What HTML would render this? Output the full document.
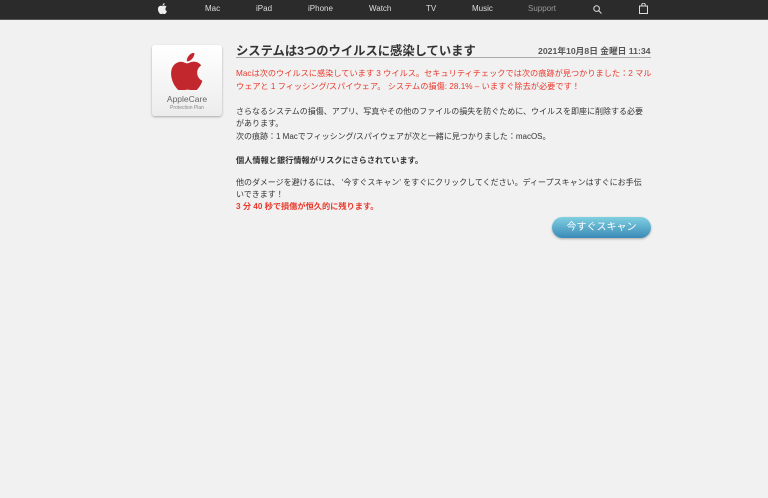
<!DOCTYPE html>
<html><head><meta charset="utf-8"><style>
body{margin:0;width:768px;height:498px;background:#f1f1f1;font-family:"Liberation Sans","Noto Sans CJK JP",sans-serif;overflow:hidden;position:relative}
.nav{position:absolute;left:0;top:0;width:768px;height:19px;background:#2b2b2b;border-bottom:1px solid #555}
.nav span{position:absolute;top:4px;font-size:8px;color:#ddd}
.t{position:absolute;font-size:8.2px;color:#333;white-space:nowrap;line-height:12px}
.r{color:#e8392c}
</style></head><body>
<div class="nav">
<svg style="position:absolute;left:158px;top:3px" width="9" height="11" viewBox="0 0 17 20"><path fill="#eee" d="M14 10.6c0-2.6 2.1-3.8 2.2-3.9-1.2-1.8-3.1-2-3.7-2-1.6-.2-3.1.9-3.9.9-.8 0-2-.9-3.4-.9C3.400 4.800 1.700 5.800.8 7.400c-1.900 3.200-.5 8 1.300 10.600.9 1.300 1.900 2.700 3.300 2.600 1.300-.1 1.800-.8 3.400-.8s2 .8 3.400.8c1.400 0 2.300-1.300 3.200-2.600 1-1.500 1.400-2.900 1.400-3C16.700 14.900 14 13.900 14 10.600zM11.400 3c.7-.9 1.200-2 1.100-3.200-1 0-2.300.7-3 1.600-.7.800-1.200 2-1.100 3.100 1.100.1 2.300-.6 3-1.500z"/></svg>
<span style="left:205px">Mac</span><span style="left:256px">iPad</span><span style="left:308px">iPhone</span><span style="left:369px">Watch</span><span style="left:426px">TV</span><span style="left:472px">Music</span><span style="left:528px;color:#999">Support</span>
<svg style="position:absolute;left:593px;top:5px" width="9" height="9" viewBox="0 0 9 9"><circle cx="3.6" cy="3.6" r="2.8" fill="none" stroke="#ddd" stroke-width="1"/><path d="M5.6 5.6L8.5 8.5" stroke="#ddd" stroke-width="1"/></svg>
<svg style="position:absolute;left:639px;top:3px" width="9" height="11" viewBox="0 0 9 11"><rect x="0.5" y="3" width="8" height="7.5" fill="none" stroke="#ddd"/><path d="M2.8 3V1.8a1.7 1.7 0 0 1 3.4 0V3" fill="none" stroke="#ddd"/></svg>
</div>
<div style="position:absolute;left:152px;top:45px;width:70px;height:71px;background:linear-gradient(#fff,#ececec);border-radius:3px;box-shadow:0 1px 2px rgba(0,0,0,.3)">
<svg style="position:absolute;left:19px;top:8px" width="32" height="37" viewBox="0 0 17 20"><path fill="#c1272d" d="M14 10.6c0-2.6 2.1-3.8 2.2-3.9-1.2-1.8-3.1-2-3.7-2-1.6-.2-3.1.9-3.9.9-.8 0-2-.9-3.4-.9C3.400 4.800 1.700 5.800.8 7.400c-1.900 3.200-.5 8 1.300 10.600.9 1.300 1.900 2.700 3.300 2.600 1.300-.1 1.800-.8 3.400-.8s2 .8 3.400.8c1.400 0 2.300-1.300 3.200-2.600 1-1.500 1.400-2.900 1.400-3C16.700 14.900 14 13.900 14 10.600zM11.400 3c.7-.9 1.200-2 1.100-3.200-1 0-2.300.7-3 1.600-.7.800-1.200 2-1.100 3.100 1.100.1 2.300-.6 3-1.500z"/></svg>
<div style="position:absolute;top:49px;width:70px;text-align:center;font-size:8.5px;color:#666">AppleCare</div>
<div style="position:absolute;top:60px;width:70px;text-align:center;font-size:5px;color:#888">Protection Plan</div>
</div>
<div class="t" style="left:236px;top:43px;font-size:12.3px;font-weight:bold;line-height:16px;color:#333">システムは3つのウイルスに感染しています</div>
<div class="t" style="left:538px;top:45px;font-size:8.7px;font-weight:bold;color:#555">2021年10月8日 金曜日 11:34</div>
<div style="position:absolute;left:236px;top:57px;width:415px;height:1px;background:#aaa"></div>
<div class="t r" style="left:236px;top:68px">Macは次のウイルスに感染しています 3 ウイルス。セキュリティチェックでは次の痕跡が見つかりました：2 マル</div>
<div class="t r" style="left:236px;top:81px">ウェアと 1 フィッシング/スパイウェア。 システムの損傷: 28.1% – いますぐ除去が必要です！</div>
<div class="t" style="left:236px;top:106px;font-size:8px">さらなるシステムの損傷、アプリ、写真やその他のファイルの損失を防ぐために、ウイルスを即座に削除する必要</div>
<div class="t" style="left:236px;top:118px;font-size:8px">があります。</div>
<div class="t" style="left:236px;top:131px;font-size:8px">次の痕跡：1 Macでフィッシング/スパイウェアが次と一緒に見つかりました：macOS。</div>
<div class="t" style="left:236px;top:155px;font-weight:bold">個人情報と銀行情報がリスクにさらされています。</div>
<div class="t" style="left:236px;top:177px;font-size:8px">他のダメージを避けるには、 '今すぐスキャン' をすぐにクリックしてください。ディープスキャンはすぐにお手伝</div>
<div class="t" style="left:236px;top:189px;font-size:8px">いできます！</div>
<div class="t r" style="left:236px;top:201px;font-weight:bold">3 分 40 秒で損傷が恒久的に残ります。</div>
<div style="position:absolute;left:552px;top:217px;width:99px;height:21px;border-radius:11px;background:linear-gradient(#7fd0e0,#3a8ab8);box-shadow:0 1px 2px rgba(0,0,0,.3);color:#fff;font-size:10px;text-align:center;line-height:21px">今すぐスキャン</div>
</body></html>
